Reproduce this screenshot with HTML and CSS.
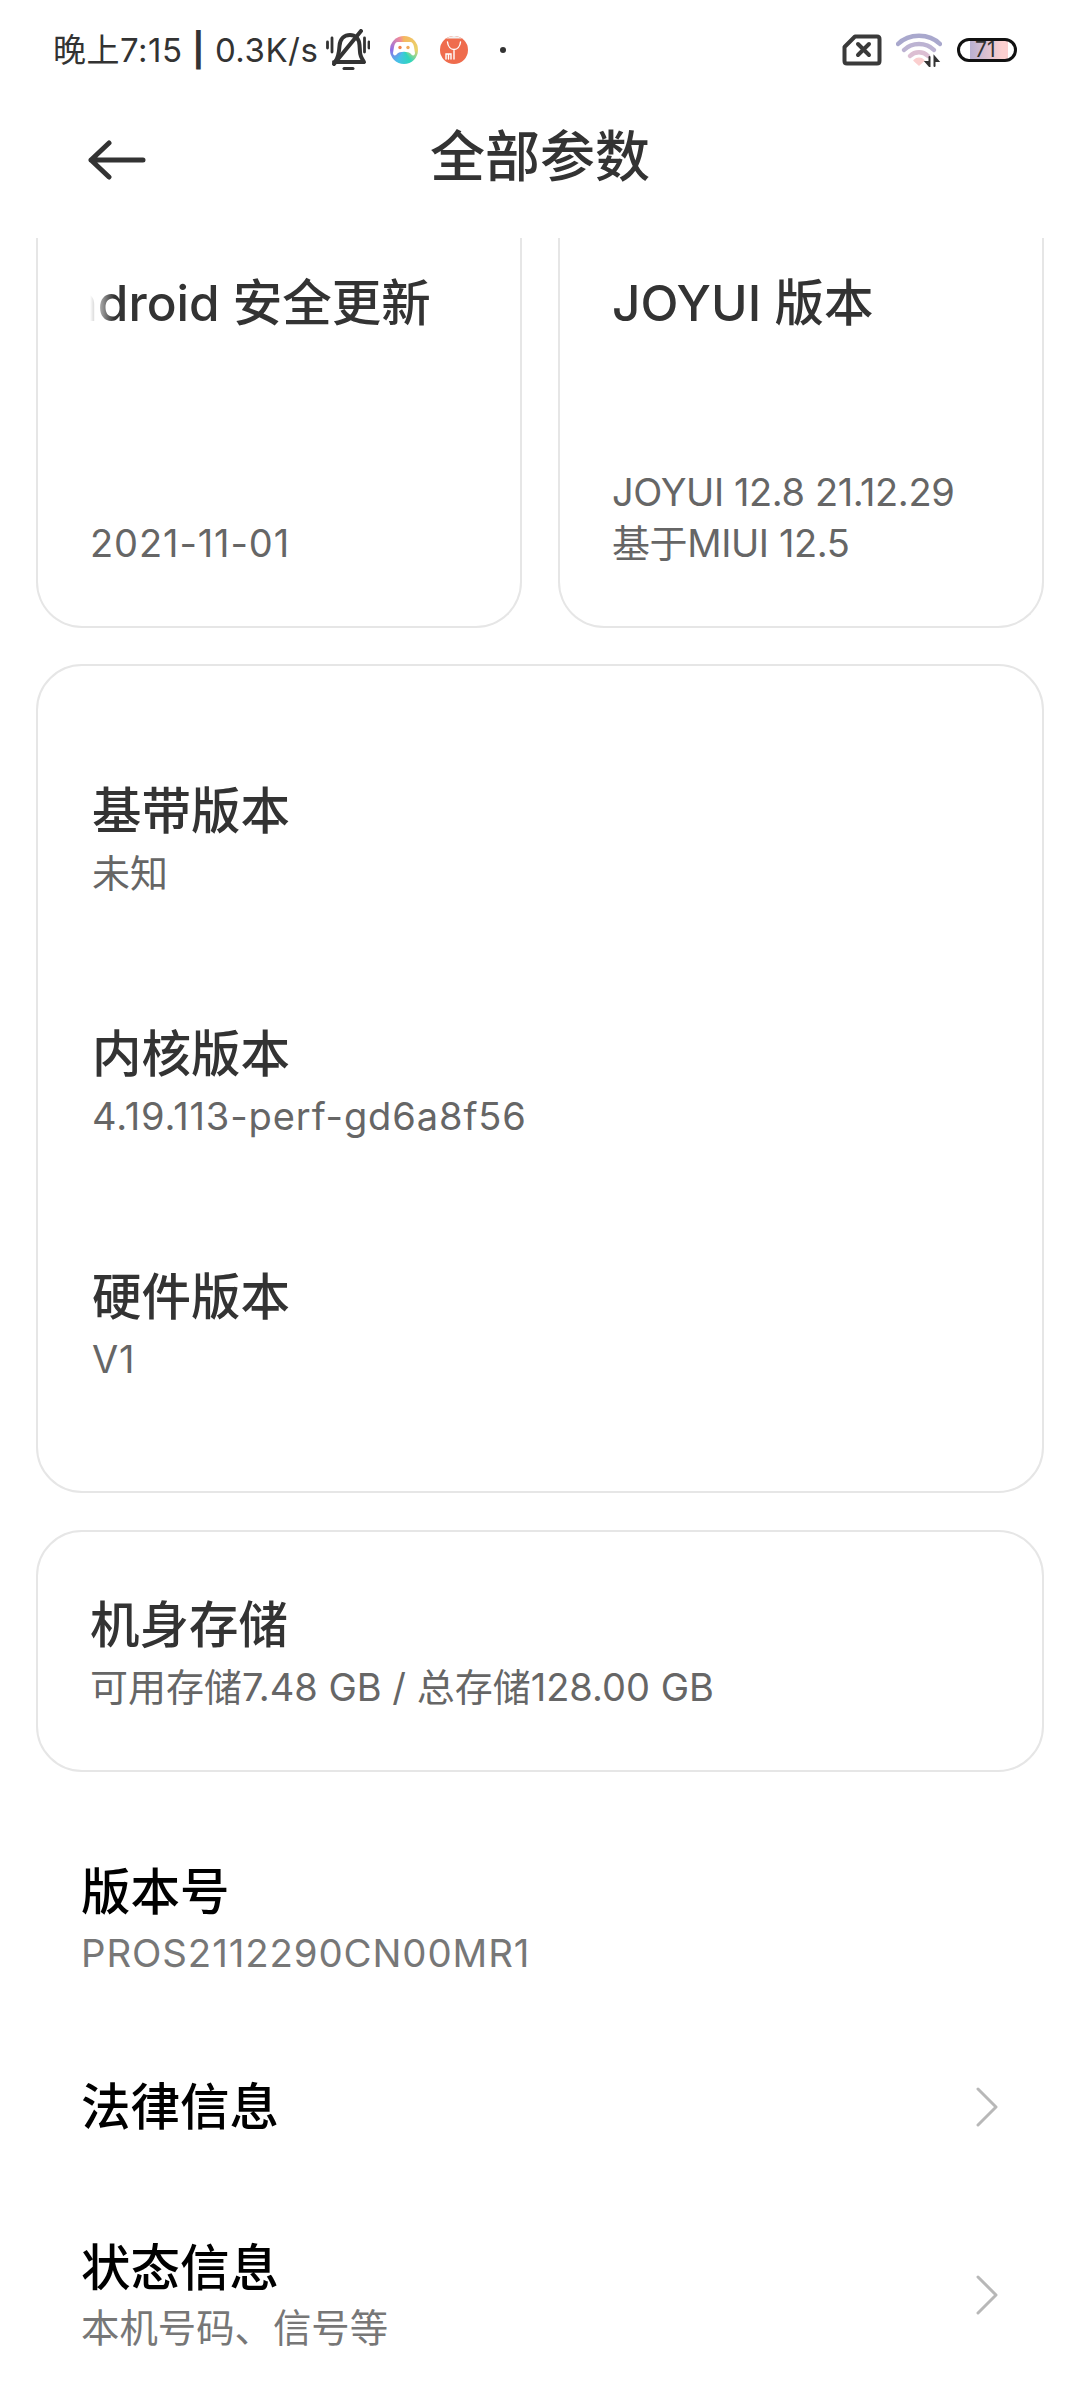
FILE: index.html
```html
<!DOCTYPE html>
<html lang="zh-CN">
<head>
<meta charset="utf-8">
<title>全部参数</title>
<link rel="stylesheet" href="styles.css">
</head>
<body>
<div class="screen">
  <div class="statusbar">
    <div class="status-left">
      <span class="clock">晚上7:15 <b class="sep">|</b> 0.3K/s</span>
      <svg class="ic-bell" viewBox="0 0 44 42" fill="none" stroke="#333" stroke-width="4" stroke-linecap="round" stroke-linejoin="round">
        <path d="M9 33 C12 29 13 25 13.500 17 C14 9 19 6 24 6 C29 6 33 9 33.500 16 L34 23 C34 27 36 30 38 33 H8"/>
        <path d="M35 2 L8 35"/>
        <path d="M1.500 13 V19 M6 9 V23 M38.500 9 V23 M43 13 V19" stroke-width="2.800"/>
        <path d="M18 39.500 H27" stroke-width="3"/>
      </svg>
      <span class="app-game">
        <svg viewBox="0 0 28 28"><path d="M8 6 H20 C22.500 6 23.500 8 24 11 L25 17 C25 20 22 20 21 18 C19 15 9 15 7 18 C6 20 3 20 3 17 L4 11 C4.500 8 5.500 6 8 6 Z" fill="#fff"/><circle cx="10" cy="11.500" r="1.700" fill="#f0814f"/><circle cx="18" cy="11.500" r="1.700" fill="#f0a85a"/></svg>
      </span>
      <svg class="app-mi" viewBox="0 0 28 28">
        <circle cx="14" cy="14" r="14" fill="#ef6c4d"/>
        <path d="M6 2.500 A14 14 0 0 1 22 2.500 Z" fill="#f1f1f1"/>
        <path d="M7.500 6 C8 11 11 13.500 14 13.500 C17 13.500 20 11 20.500 6 M14 13.500 V23 M6 23 V18 H11 V23 M8.500 18 V23" fill="none" stroke="#fff" stroke-width="1.400" stroke-linecap="round"/>
      </svg>
      <span class="dot"></span>
    </div>
    <div class="status-right">
      <svg class="ic-sim" viewBox="0 0 40 32" fill="none" stroke="#3a3a3a" stroke-linecap="round" stroke-linejoin="round">
        <path d="M13 2.500 H35 C36.500 2.500 37.500 3.500 37.500 5 V27 C37.500 28.500 36.500 29.500 35 29.500 H5 C3.500 29.500 2.500 28.500 2.500 27 V13 Z" stroke-width="4"/>
        <path d="M16 10 L27 21 M27 10 L16 21" stroke-width="4"/>
      </svg>
      <svg class="ic-wifi" viewBox="0 0 46 34" fill="none" stroke-linecap="round">
        <path d="M2 11 C13 0 33 0 44 11" stroke="#a9a8cd" stroke-width="4.500"/>
        <path d="M8 17 C16 9 30 9 38 17" stroke="#bcb3d2" stroke-width="4.500"/>
        <path d="M14 23 C19 18 27 18 32 23" stroke="#dcbfd3" stroke-width="4.500"/>
        <path d="M18 27.500 C21 24.500 25 24.500 28 27.500 L23 32 Z" fill="#fbcfcf" stroke="#fbcfcf" stroke-width="1.500" stroke-linejoin="round"/>
        <path d="M33.500 24 V33 L30 29 H33.500 M38.500 33 V24 L42 28 H38.500" fill="#333" stroke="#333" stroke-width="2"/>
      </svg>
      <span class="battery"><span class="battery-num">71</span></span>
    </div>
  </div>

  <header class="topbar">
    <svg class="ic-back" viewBox="0 0 58 40" fill="none" stroke="#333" stroke-width="5" stroke-linecap="round" stroke-linejoin="round">
      <path d="M55 20 H3 M21 3 L3 20 L21 37"/>
    </svg>
    <h1 class="page-title">全部参数</h1>
  </header>

  <main class="content">
    <section class="grid-two">
      <div class="card small">
        <div class="card-title faded"><span class="marquee">Android 安全更新</span></div>
        <div class="value lat">2021-11-01</div>
      </div>
      <div class="card small">
        <div class="card-title">JOYUI 版本</div>
        <div class="value tight">JOYUI 12.8 21.12.29<br>基于MIUI 12.5</div>
      </div>
    </section>

    <section class="card versions">
      <div class="pair"><div class="card-title">基带版本</div><div class="value">未知</div></div>
      <div class="pair"><div class="card-title">内核版本</div><div class="value lat">4.19.113-perf-gd6a8f56</div></div>
      <div class="pair"><div class="card-title">硬件版本</div><div class="value lat">V1</div></div>
    </section>

    <section class="card storage">
      <div class="card-title">机身存储</div>
      <div class="value">可用存储7.48 GB / 总存储128.00 GB</div>
    </section>

    <section class="rows">
      <div class="row first">
        <div><div class="row-title">版本号</div><div class="row-sub lat">PROS2112290CN00MR1</div></div>
      </div>
      <div class="row legal">
        <div class="row-title">法律信息</div>
        <svg class="chev" viewBox="0 0 22 40" fill="none" stroke="#b8b8b8" stroke-width="3" stroke-linecap="round" stroke-linejoin="round"><path d="M2 2 L20 20 L2 38"/></svg>
      </div>
      <div class="row status">
        <div><div class="row-title">状态信息</div><div class="row-sub">本机号码、信号等</div></div>
        <svg class="chev" viewBox="0 0 22 40" fill="none" stroke="#b8b8b8" stroke-width="3" stroke-linecap="round" stroke-linejoin="round"><path d="M2 2 L20 20 L2 38"/></svg>
      </div>
    </section>
  </main>
</div>
</body>
</html>
```

FILE: styles.css
```css
* { box-sizing: border-box; }
html, body { margin: 0; padding: 0; background: #fff; }
body { font-family: "Inter", "Noto Sans CJK SC", sans-serif; color: #333; }
.screen { width: 1080px; height: 2400px; overflow: hidden; background: #fff; }

.statusbar { height: 100px; display: flex; justify-content: space-between; align-items: center; padding: 0 63px 0 53px; }
.status-left, .status-right { display: flex; align-items: center; }
.clock { font-size: 33px; line-height: 40px; color: #333; white-space: nowrap; letter-spacing: 0.5px; }
.sep { font-weight: 700; }
.ic-bell { width: 44px; height: 42px; margin-left: 8px; }
.app-game { width: 28px; height: 28px; margin-left: 20px; border-radius: 50%; background: conic-gradient(#f5b860 0deg, #e9d36a 90deg, #2ed6bc 150deg, #47c0e8 210deg, #8f6fe8 270deg, #f08a9a 340deg, #f5b860 360deg); display: block; }
.app-game svg { display: block; width: 28px; height: 28px; }
.app-mi { width: 28px; height: 28px; margin-left: 22px; }
.dot { width: 6px; height: 6px; border-radius: 50%; background: #333; margin-left: 32px; }

.ic-sim { width: 40px; height: 32px; margin-right: -1px; }
.ic-wifi { width: 46px; height: 34px; margin-left: 15px; }
.battery { width: 60px; height: 24px; margin-left: 15px; border: 3.500px solid #111; border-radius: 12px; position: relative; display: flex; align-items: center; padding-left: 15px; background: linear-gradient(90deg, #fff 0 10px, #b9b0d2 10px, #fcd0d0 42px, #fcd0d0 48px, #fff 48px); }
.battery-num { font-size: 21px; line-height: 20px; color: #333; }

.topbar { height: 138px; position: relative; display: flex; align-items: center; justify-content: center; padding-bottom: 26px; }
.ic-back { position: absolute; left: 88px; top: 40px; width: 58px; height: 40px; }
.page-title { margin: 0; font-size: 55px; line-height: 70px; font-weight: 500; color: #333; }

.content { padding: 0 36px; }
.grid-two { display: grid; grid-template-columns: 486px 486px; column-gap: 36px; height: 390px; }
.card { border: 2px solid #e6e6e6; border-radius: 46px; background: #fff; }
.small { border-top: 0; border-top-left-radius: 0; border-top-right-radius: 0; display: flex; flex-direction: column; justify-content: space-between; padding: 32px 30px 57px 52px; }
.card-title { font-size: 49.500px; line-height: 66px; font-weight: 500; color: #333; white-space: nowrap; }
.value { font-size: 38px; line-height: 51px; color: #666; white-space: nowrap; }
.lat { letter-spacing: 0.9px; }
.tight { letter-spacing: -0.4px; }
.faded { overflow: hidden; -webkit-mask-image: linear-gradient(90deg, transparent 0, #000 24px); mask-image: linear-gradient(90deg, transparent 0, #000 24px); }
.marquee { display: inline-block; margin-left: -57px; }

.versions { margin-top: 36px; height: 829px; padding: 112px 40px 0 54px; display: flex; flex-direction: column; gap: 122px; }
.pair .value { margin-top: 4px; }

.storage { margin-top: 37px; height: 242px; padding: 60px 40px 0 52px; }
.storage .value { margin-top: 4px; }

.rows { padding: 0 0 0 45px; }
.row { display: flex; align-items: center; justify-content: space-between; padding-right: 46px; }
.row-title { font-size: 49.500px; line-height: 66px; font-weight: 500; color: #000; }
.row-sub { font-size: 38.400px; line-height: 54px; color: #777; white-space: nowrap; }
.row.first { margin-top: 87px; }
.row.first .row-sub { margin-top: 1px; }
.row.legal { margin-top: 94px; }
.row.status { margin-top: 95px; }
.chev { width: 22px; height: 40px; }
```
